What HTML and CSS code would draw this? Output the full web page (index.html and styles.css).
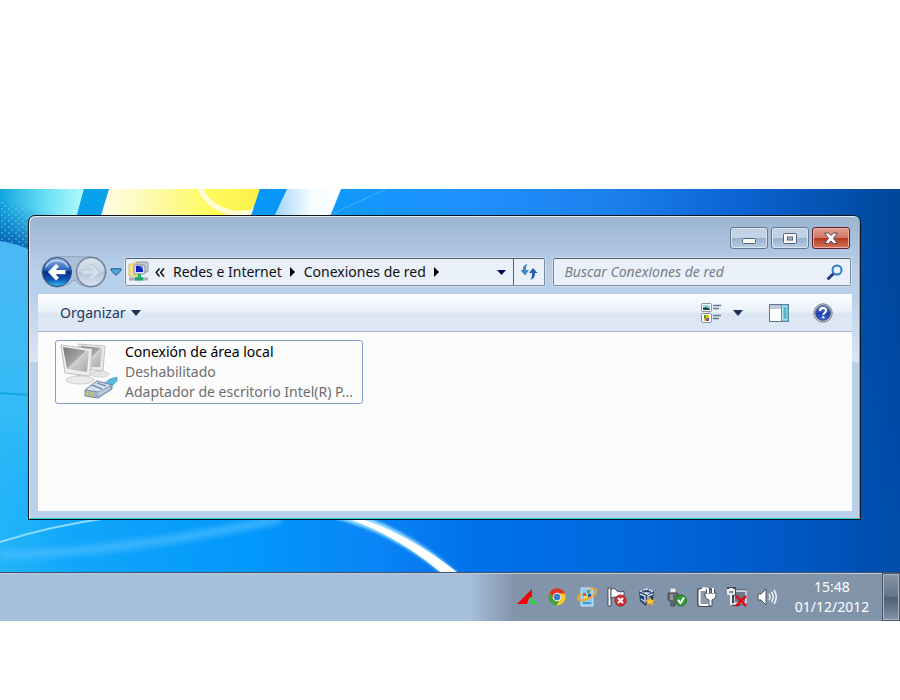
FILE: index.html
```html
<!DOCTYPE html>
<html lang="es">
<head>
<meta charset="utf-8">
<title>Conexiones de red</title>
<link rel="stylesheet" href="styles.css">
</head>
<body>
<div class="desktop">
  <svg class="wallpaper" viewBox="0 0 900 383" preserveAspectRatio="none" aria-hidden="true">
    <defs>
      <linearGradient id="sky" x1="0" y1="0" x2="1" y2="0">
        <stop offset="0" stop-color="#23b4f8"/><stop offset=".08" stop-color="#10a7fb"/><stop offset=".28" stop-color="#0297fb"/>
        <stop offset=".42" stop-color="#0a84f6"/><stop offset=".52" stop-color="#0072ea"/><stop offset=".7" stop-color="#0068de"/><stop offset=".86" stop-color="#005ac8"/><stop offset="1" stop-color="#004cab"/>
      </linearGradient>
      <linearGradient id="top" x1="300" y1="0" x2="900" y2="0" gradientUnits="userSpaceOnUse">
        <stop offset="0" stop-color="#0a9cfb"/><stop offset=".28" stop-color="#2090fc"/><stop offset=".52" stop-color="#1b80ee"/><stop offset=".75" stop-color="#0a61cf"/><stop offset="1" stop-color="#004699"/>
      </linearGradient>
      <linearGradient id="fade" x1="0" y1="0" x2="0" y2="1">
        <stop offset="0" stop-color="#fff"/><stop offset=".2" stop-color="#fff"/><stop offset="1" stop-color="#000"/>
      </linearGradient>
      <mask id="topmask"><rect x="300" width="600" height="320" fill="url(#fade)"/></mask>
      <linearGradient id="aqua" x1="0" y1="0" x2="1" y2="0">
        <stop offset="0" stop-color="#12a4e0"/><stop offset=".5" stop-color="#62dcf4"/><stop offset="1" stop-color="#b4fafa"/>
      </linearGradient>
      <linearGradient id="deep" x1="20" y1="14" x2="8" y2="58" gradientUnits="userSpaceOnUse">
        <stop offset="0" stop-color="#0878c8" stop-opacity="0"/><stop offset="1" stop-color="#0559a8"/>
      </linearGradient>
      <linearGradient id="sun" x1="0" y1="0" x2="1" y2="0">
        <stop offset="0" stop-color="#fffdec"/><stop offset=".35" stop-color="#fdf9a8"/><stop offset=".7" stop-color="#fffb5c"/><stop offset="1" stop-color="#fcf048"/>
      </linearGradient>
      <linearGradient id="pane" x1="0" y1="0" x2="1" y2="0">
        <stop offset="0" stop-color="#9ed2f8"/><stop offset=".55" stop-color="#f4fcff"/><stop offset="1" stop-color="#fff"/>
      </linearGradient>
      <linearGradient id="left" x1="0" y1="0" x2="0" y2="1">
        <stop offset="0" stop-color="#4cb8f4"/><stop offset=".5" stop-color="#34bcf6"/><stop offset="1" stop-color="#1eb0f9" stop-opacity="0"/>
      </linearGradient>
      <pattern id="dots" width="7" height="6" patternUnits="userSpaceOnUse"><circle cx="2" cy="2" r="1" fill="#62cdf2"/><circle cx="5" cy="5" r="1" fill="#62cdf2"/></pattern>
      <filter id="soft"><feGaussianBlur stdDeviation="1.5"/></filter>
      <filter id="haze" x="-20%" y="-50%" width="140%" height="200%"><feGaussianBlur stdDeviation="3"/></filter>
    </defs>
    <rect width="900" height="383" fill="url(#sky)"/>
    <rect x="300" width="600" height="320" fill="url(#top)" mask="url(#topmask)"/>
    <path d="M0 0H84L68 60H0Z" fill="url(#aqua)"/>
    <path d="M0 0H84L68 70H0Z" fill="url(#deep)"/>
    <path d="M0 12L30 20V60L0 52Z" fill="url(#dots)" opacity=".6"/>
    <path d="M0 52Q18 54 40 66V383H0Z" fill="url(#left)"/>
    <path d="M84 0H109L98 30H76Z" fill="#08a0ea"/>
    <path d="M109 0H260L250 30H100Z" fill="url(#sun)"/>
    <path d="M200 0C212 24 238 28 258 21" fill="none" stroke="#fffef0" stroke-width="5" opacity=".85"/>
    <path d="M260 0H287L274 30H250Z" fill="#0797f8"/>
    <path d="M287 0H341L329 30H273Z" fill="url(#pane)"/>
    <path d="M330 26L386 0" stroke="#3eb2fb" stroke-width="1"/>
    <path d="M0 204L30 206" stroke="#16a8dc" stroke-width="2"/>
    <path d="M0 353Q50 337 108 329" fill="none" stroke="#8cdcff" stroke-width="2"/>
    <path d="M0 366Q120 364 280 330" fill="none" stroke="#4ebcff" stroke-width="8" opacity=".8" filter="url(#haze)"/>
    <path d="M336 324Q400 340 454 388" fill="none" stroke="#9be2ff" stroke-width="11" filter="url(#soft)"/>
    <path d="M330 324L358 329Q408 344 462 387L444 386Q390 340 330 324Z" fill="#fff"/>
  </svg>

  <main class="window">
    <header class="caption">
      <button class="cap" aria-label="Minimizar"><svg width="16" height="16" viewBox="0 0 16 16"><rect x="1.500" y="8.500" width="13" height="5" rx="1" fill="#f6f6f2" stroke="#53627a"/></svg></button>
      <button class="cap" aria-label="Maximizar"><svg width="16" height="16" viewBox="0 0 16 16"><rect x="1.500" y="3.500" width="13" height="10" rx="1" fill="#f6f6f6" stroke="#53627a"/><rect x="5.500" y="7" width="5" height="3" fill="#a9bfd9" stroke="#53627a"/></svg></button>
      <button class="cap close" aria-label="Cerrar"><svg width="16" height="16" viewBox="0 0 16 16"><path d="M1.500 3H5.500L8 5.500L10.500 3H14.500L10.500 8.300L14.500 13.500H10.500L8 11L5.500 13.500H1.500L5.500 8.300Z" fill="#fafafa" stroke="#5a4555"/></svg></button>
    </header>

    <nav class="navbar">
      <div class="travel">
        <svg class="cradle" width="66" height="32" viewBox="0 0 66 32" aria-hidden="true"><path d="M16 .7H50A15.300 15.300 0 0 1 50 31.300Q40 31 33 24Q26 31 16 31.300A15.300 15.300 0 0 1 16 .7Z" fill="#a9bfd9" stroke="#94a6bd"/></svg>
        <button class="round" aria-label="Atrás"><svg width="32" height="32" viewBox="0 0 32 32">
          <defs><linearGradient id="bk" x1="0" y1="0" x2="0" y2="1"><stop offset="0" stop-color="#9ab8e8"/><stop offset=".42" stop-color="#2c66bd"/><stop offset=".5" stop-color="#052c86"/><stop offset=".75" stop-color="#0a56b4"/><stop offset="1" stop-color="#32c4f4"/></linearGradient></defs>
          <circle cx="16" cy="16" r="14.500" fill="url(#bk)" stroke="#2b4677"/><path d="M5 11A12.500 12.500 0 0 1 27 11" fill="none" stroke="#dbe8fa" stroke-width="1.500" opacity=".7"/>
          <path d="M7 16L15 8L18 10.500L14.500 14H24.500V18.300H14.500L18 21.700L15 24.500Z" fill="#fff"/></svg></button>
        <button class="round" aria-label="Adelante"><svg width="32" height="32" viewBox="0 0 32 32">
          <defs><linearGradient id="fw" x1="0" y1="0" x2="0" y2="1"><stop offset="0" stop-color="#dbe4ef"/><stop offset=".48" stop-color="#c6d3e2"/><stop offset=".52" stop-color="#b4c4d8"/><stop offset="1" stop-color="#dce7f4"/></linearGradient></defs>
          <circle cx="16" cy="16" r="14.500" fill="url(#fw)" stroke="#77869c" stroke-width="1.500"/>
          <path d="M25 16L17 8L14 10.500L17.500 14H7.500V18.300H17.500L14 21.700L17 24.500Z" fill="#d3deea" stroke="#bdc9d8"/></svg></button>
      </div>
      <button class="recent" aria-label="Páginas recientes"><svg width="12" height="8" viewBox="0 0 12 8"><path d="M1 .8H11V2.500L6 7.300L1 2.500Z" fill="#4ba8dc" stroke="#1f5485"/></svg></button>
      <div class="address">
        <svg class="place" width="22" height="22" viewBox="0 0 22 22" aria-hidden="true">
          <path d="M1 3H6L7 1H11V15H1Z" fill="#f3e08a" stroke="#d8c060"/><rect x="9" y="1" width="11" height="10" rx="1" fill="#c5cbd4" stroke="#8c95a4"/><rect x="6" y="4" width="11" height="9" rx="1" fill="#dde2ec" stroke="#848da5"/><rect x="8" y="5" width="7" height="6" fill="#1020c4"/><path d="M12 5H15V9Z" fill="#7996ee"/>
          <path d="M10 13H13V16H15V19H8V16H10Z" fill="#1ab56e"/><path d="M1 18H20" stroke="#a5adb5" stroke-width="3"/><path d="M7 18H15" stroke="#17a866" stroke-width="3"/></svg>
        <svg class="more" width="10" height="9" viewBox="0 0 10 9" aria-hidden="true"><path d="M4.500 .5L1.200 4.500L4.500 8.500M9 .5L5.700 4.500L9 8.500" fill="none" stroke="#111" stroke-width="1.500"/></svg>
        <a href="#">Redes e Internet</a>
        <svg class="sep" width="5" height="10" viewBox="0 0 5 10" aria-hidden="true"><path d="M0 0L5 5L0 10Z" fill="#000"/></svg>
        <a href="#">Conexiones de red</a>
        <svg class="sep" width="5" height="10" viewBox="0 0 5 10" aria-hidden="true"><path d="M0 0L5 5L0 10Z" fill="#000"/></svg>
        <button class="history" aria-label="Ubicaciones anteriores"><svg width="9" height="5" viewBox="0 0 9 5"><path d="M0 0H9L4.500 5Z" fill="#06064e"/></svg></button>
        <button class="refresh" aria-label="Actualizar"><svg width="18" height="18" viewBox="0 0 18 18"><path d="M7.500 1Q2.500 2 3 7H.5L5 12.500L9 7H6Q5.500 4 7.500 1Z" fill="#3d86ca"/><path d="M10.500 17Q15.500 15 15 10H17.500L13 5L9 10H12Q12.500 14 10.500 17Z" fill="#2460ae"/></svg></button>
      </div>
      <form class="search">
        <input type="search" aria-label="Buscar" placeholder="Buscar Conexiones de red">
        <svg width="16" height="16" viewBox="0 0 16 16" aria-hidden="true"><path d="M1.500 14.500L6.500 9.500" stroke="#263b86" stroke-width="3" stroke-linecap="round"/><circle cx="10" cy="6" r="4.500" fill="#e8f4fd" stroke="#2f7cc4" stroke-width="2"/></svg>
      </form>
    </nav>

    <section class="client">
      <div class="toolbar">
        <button class="tool organize">Organizar <svg width="10" height="6" viewBox="0 0 10 6" aria-hidden="true"><path d="M0 0H10L5 6Z" fill="#1b3353"/></svg></button>
        <button class="tool" aria-label="Cambiar la vista"><svg width="20" height="20" viewBox="0 0 20 20"><rect x=".5" y=".5" width="10" height="8" rx="1" fill="#fff" stroke="#8291a5"/><rect x="2" y="2" width="7" height="5" fill="#8dd8ee"/><path d="M2 7V5L5 4L9 6V7Z" fill="#214b39"/><rect x=".5" y="10.500" width="10" height="9" rx="1" fill="#fff" stroke="#8291a5"/><path d="M3 12H5V15H3Z" fill="#3c9f3c"/><path d="M5 12H8V15H5Z" fill="#f0bc19"/><path d="M3 15H5V18H3Z" fill="#cad339"/><path d="M4 14L8 18H5Z" fill="#bf2850"/><path d="M6 15H8V18H7Z" fill="#2e54ba"/><path d="M12 2.500H20M12 5.500H18M12 12.500H20M12 15.500H18" stroke="#66758e" stroke-width="1.300"/></svg></button>
        <button class="tool drop" aria-label="Más opciones"><svg width="10" height="6" viewBox="0 0 10 6"><path d="M0 0H10L5 6Z" fill="#1b3353"/></svg></button>
        <button class="tool pane" aria-label="Mostrar el panel de vista previa"><svg width="20" height="18" viewBox="0 0 20 18"><rect x=".5" y=".5" width="19" height="17" fill="#fdfdfd" stroke="#5f748f"/><path d="M1 2H12" stroke="#b9cade" stroke-width="2"/><path d="M1 4H12" stroke="#8496b0"/><rect x="12.500" y="1" width="6.500" height="16" fill="#b1e5f2" stroke="#4e9ab8"/><rect x="14.500" y="3" width="3" height="12" fill="#55b4cd"/></svg></button>
        <button class="tool help" aria-label="Ayuda"><svg width="20" height="20" viewBox="0 0 20 20"><defs><linearGradient id="hp" x1="0" y1="0" x2="0" y2="1"><stop offset="0" stop-color="#7c9be4"/><stop offset=".5" stop-color="#1f3fae"/><stop offset="1" stop-color="#3966d4"/></linearGradient></defs><circle cx="10" cy="10" r="9.200" fill="#c3c7ce" stroke="#7c818b"/><circle cx="10" cy="10" r="7.300" fill="url(#hp)" stroke="#334787"/><path d="M7 8Q7 5 10 5T13 7.700Q13 9 11.500 10Q10.300 10.800 10.300 12" fill="none" stroke="#fff" stroke-width="2"/><rect x="9.200" y="13.200" width="2.200" height="2.200" fill="#fff"/></svg></button>
      </div>
      <div class="list">
        <article class="item">
          <svg width="60" height="58" viewBox="0 0 60 58" aria-hidden="true">
            <defs><linearGradient id="scr" x1="0" y1="0" x2="1" y2="1"><stop offset="0" stop-color="#777"/><stop offset=".5" stop-color="#a5a5a5"/><stop offset=".52" stop-color="#cfcfcf"/><stop offset="1" stop-color="#a8a8a8"/></linearGradient></defs>
            <ellipse cx="40" cy="32" rx="9" ry="3" fill="#e4e4e4" stroke="#d2d2d2"/>
            <path d="M18 2L45 4L43 29L22 27Z" fill="#e8e8e8" stroke="#c4c4c4"/><path d="M21 4L42 6L40 25L23 25Z" fill="url(#scr)"/>
            <path d="M16 31H24V37H16Z" fill="#d0d0d0"/><ellipse cx="20" cy="38" rx="14" ry="4" fill="#eaeaea" stroke="#d0d0d0"/>
            <path d="M1 3L32 7L30 34L5 31Z" fill="#efefef" stroke="#c0c0c0"/><path d="M3 5L29 9L27 30L7 27Z" fill="url(#scr)"/>
            <path d="M42 43L50 37L57 35V39L50 46L46 49Z" fill="#55b7dc" stroke="#61b0ce"/>
            <path d="M25 48L37 39L52 43V47L38 56L25 54Z" fill="#9eafca" stroke="#7189ae"/><path d="M25 48L37 39L52 43L39 50Z" fill="#d6e0ef" stroke="#7890b3"/><path d="M27 49V54M30 49V54M33 50V55" stroke="#d1c45b" stroke-width="1.500"/><path d="M37 51L50 45V47L39 54Z" fill="#bac9df"/><path d="M32 43L42 47M37 41L46 44" stroke="#7890b3" stroke-width="1.500"/>
          </svg>
          <div class="info">
            <h2>Conexión de área local</h2>
            <p>Deshabilitado</p>
            <p>Adaptador de escritorio Intel(R) P...</p>
          </div>
        </article>
      </div>
    </section>
  </main>

  <footer class="taskbar">
    <div class="tray">
      <svg width="20" height="20" viewBox="0 0 20 20" aria-hidden="true"><path d="M0 17L15 2V10L12 11L10 17Z" fill="#f00007"/><path d="M12 9L20 17H15Z" fill="#06ed13"/></svg>
      <svg width="20" height="20" viewBox="0 0 20 20" aria-hidden="true"><circle cx="10" cy="10" r="8.500" fill="#f5cd25"/><path d="M2.600 5.700A8.500 8.500 0 0 1 18 6.500H10L6.500 12Z" fill="#d93428"/><path d="M2.600 5.700L7 13L12 14L9.500 18.500A8.500 8.500 0 0 1 2.600 5.700Z" fill="#44a047"/><circle cx="10" cy="10" r="4.300" fill="#f6f3e5"/><circle cx="10" cy="10" r="3.300" fill="#3c7fc4"/></svg>
      <svg width="20" height="20" viewBox="0 0 20 20" aria-hidden="true"><path d="M4 1H16V19H4Z" fill="#8cccf1" stroke="#c8e8f8"/><path d="M6 16H14" stroke="#4e96cc" stroke-width="2"/><path d="M6 6H9V9H6Z" fill="#de5530"/><path d="M10 3H13V6H10Z" fill="#54a63d"/><path d="M11 7H14V10H11Z" fill="#2258b2"/><path d="M7 9H10V12H7Z" fill="#f6db45"/><path d="M13 2Q20 1 19 5Q16 11 7 13Q0 14 1 10Q2 8 4 7" fill="none" stroke="#f1a535" stroke-width="2"/></svg>
      <svg width="20" height="20" viewBox="0 0 20 20" aria-hidden="true"><path d="M1 1H4V19H1Z" fill="#fff" stroke="#454c57"/><path d="M4 2Q8 0 10 4Q14 6 17 4V12Q12 13 9 10Q6 10 4 11Z" fill="#fff" stroke="#454c57"/><circle cx="13.500" cy="13.500" r="5.500" fill="#d92d2b" stroke="#9b2020"/><path d="M11 11L16 16M16 11L11 16" stroke="#fff" stroke-width="2"/></svg>
      <svg width="20" height="20" viewBox="0 0 20 20" aria-hidden="true"><path d="M2 4L10 1L17 4L16 14L9 19L3 14Z" fill="#203f67"/><path d="M2 4L10 1L17 4L10 8Z" fill="#dce8f2"/><path d="M5 4L14 5M6 5L12 3" stroke="#284670" stroke-width="1.500"/><path d="M3 7L8 9V16M16 7L11 9V16M4 12L7 14" stroke="#c5d6e6" stroke-width="1.500" fill="none"/><path d="M13 10L14.500 13H18L15.500 15L17 18.500L13 16.500L9.500 18.500L10.500 15L8 13H11.500Z" fill="#ffc53a" stroke="#d58c20" stroke-width=".5"/></svg>
      <svg width="20" height="20" viewBox="0 0 20 20" aria-hidden="true"><rect x="3" y="1" width="6" height="5" fill="#e9ebed" stroke="#8a8f94"/><path d="M1 6H11V13L8 15V19H4V15L1 13Z" fill="#63686d" stroke="#4b4f54"/><path d="M3 7H6V13H3Z" fill="#8d9297"/><circle cx="14" cy="13.500" r="5.500" fill="#2f9d31" stroke="#1a771e"/><path d="M11 13L13.500 16L17 10.500" fill="none" stroke="#fff" stroke-width="2"/></svg>
      <svg width="20" height="20" viewBox="0 0 20 20" aria-hidden="true"><rect x="2" y="3" width="11" height="15" rx="1" fill="none" stroke="#474e59" stroke-width="4"/><path d="M5 1.500H10" stroke="#fff" stroke-width="2"/><rect x="2.500" y="3" width="10" height="15" rx="1" fill="#8f9aaa" stroke="#fff" stroke-width="2"/><path d="M11 2V6M16 2V6" stroke="#474e59" stroke-width="4"/><path d="M8 6H19V9Q18 12 15 13V19H12V13Q9 12 8 9Z" fill="#fff" stroke="#474e59"/><path d="M11 1V6M16 1V6" stroke="#fff" stroke-width="2"/></svg>
      <svg width="20" height="20" viewBox="0 0 20 20" aria-hidden="true"><rect x="7" y="4" width="12" height="12" fill="#7a8798" stroke="#3e4651" stroke-width="3"/><rect x="7" y="4" width="12" height="12" fill="#6b7889" stroke="#e9edf1" stroke-width="1.500"/><path d="M0 1H8V7L6 9V18H13" fill="none" stroke="#3f4651" stroke-width="2"/><path d="M1 2V7H7V2M3 1V4M5 1V4M4 7V17H12" fill="none" stroke="#fff" stroke-width="1.700"/><path d="M9 9L19 19M19 9L9 19" stroke="#e00f19" stroke-width="2.500"/></svg>
      <svg width="20" height="20" viewBox="0 0 20 20" aria-hidden="true"><path d="M1 7H4L9 2V18L4 13H1Z" fill="#fff" stroke="#4d5663"/><path d="M12 7Q14 10 12 13M14.500 5Q18 10 14.500 15M17 3Q21.500 10 17 17" fill="none" stroke="#eef1f4" stroke-width="1.500"/></svg>
    </div>
    <div class="clock"><time>15:48</time><time>01/12/2012</time></div>
    <button class="peek" aria-label="Mostrar escritorio"></button>
  </footer>
</div>
</body>
</html>
```
FILE: styles.css
```css
* { box-sizing: border-box; }
body {
  margin: 0;
  padding: 189px 0 79px;
  background: #fff;
  font-family: "Noto Sans", "Open Sans", sans-serif;
  font-size: 14px;
  line-height: 20px;
  color: #111;
}
button, input { font: inherit; color: inherit; }
button { padding: 0; border: 0; background: none; }
svg { display: block; flex: none; }

.desktop { position: relative; overflow: hidden; background: #0a84f6; }
.wallpaper { position: absolute; top: 0; left: 0; width: 100%; height: calc(100% - 49px); }

.window {
  position: relative;
  margin: 26px 39px 52px 28px;
  padding: 11px 8px 8px 9px;
  border: 1px solid #10151c;
  border-radius: 7px 7px 0 0;
  background:
    linear-gradient(#d9e6f500, #d9e6f5) left 78px / 9px 68px no-repeat,
    linear-gradient(#d9e6f500, #d9e6f5) right 78px / 8px 68px no-repeat,
    linear-gradient(#9bb4d0, #b9d0ea 56px, #b9d0ea);
  box-shadow: inset 1px 1px 0 #e4edf5, inset -1px -1px 0 #2ccbd4;
}

.caption { display: flex; justify-content: flex-end; gap: 3px; padding-right: 2px; }
.cap {
  display: flex; align-items: center; justify-content: center;
  width: 38px; height: 22px;
  border: 1px solid #66788f; border-radius: 3px;
  background: linear-gradient(#c2d2e5 48%, #9bb2cd 52%, #b8cde4);
  box-shadow: inset 0 0 0 1px #d8e4f1;
}
.close {
  border-color: #5c2026;
  background: linear-gradient(#e3a092, #d17765 48%, #b53a20 52%, #d4755a);
  box-shadow: inset 0 0 0 1px #e9b2a5;
}

.navbar { display: flex; align-items: center; margin: 7px 1px 6px 3px; }
.travel { position: relative; display: flex; gap: 2px; }
.cradle { position: absolute; top: 0; left: 0; }
.round { position: relative; width: 32px; height: 32px; }
.recent { width: 12px; margin: 0 3px; }
.address, .search {
  display: flex; align-items: center;
  height: 28px;
  border: 1px solid #7e8b9c; border-top-color: #545f6e; border-radius: 2px;
  background: #e9f0f9;
  box-shadow: 0 0 0 1px #cfdff0;
}
.address { flex: 417; min-width: 0; padding-left: 2px; }
.address a { color: #111; text-decoration: none; white-space: nowrap; }
.more { margin: 0 8px 0 5px; }
.sep { margin: 0 9px 0 8px; }
.history { display: flex; justify-content: center; width: 24px; margin-left: auto; }
.refresh { display: flex; align-items: center; justify-content: center; width: 31px; height: 26px; border-left: 1px solid #59636f; }
.search { flex: 279; min-width: 0; margin-left: 8px; padding: 0 7px 0 10px; }
.search input { flex: 1; min-width: 0; padding: 0; border: 0; outline: 0; background: none; }
.search input::placeholder { color: #777e86; font-style: italic; opacity: 1; }

.client { background: #fcfcfc; }
.toolbar {
  display: flex; align-items: center;
  height: 38px; padding: 0 19px 0 22px;
  border-bottom: 1px solid #9fb3ce;
  background: linear-gradient(#fcfdff, #eaf1fa 48%, #dce6f3 52%, #dde7f5);
  color: #1e395b;
}
.tool { display: flex; align-items: center; gap: 5px; }
.organize { margin-right: auto; }
.drop { margin: 0 26px 0 12px; }
.help { margin-left: 24px; }
.list { min-height: 179px; padding: 8px 17px; }
.item {
  display: flex; gap: 5px;
  width: 38%; min-width: 308px; height: 64px;
  padding: 1px 4px;
  border: 1px solid #7f9fc8; border-radius: 3px;
}
.info { min-width: 0; color: #6d6d6d; white-space: nowrap; }
.info h2 { margin: 0; font: inherit; color: #000; }
.info p { margin: 0; }

.taskbar {
  position: relative;
  display: flex; align-items: stretch; justify-content: flex-end;
  height: 49px;
  border-top: 1px solid #40546d;
  background: linear-gradient(90deg, #a6bfdb calc(100% - 430px), #8294aa calc(100% - 385px));
  box-shadow: inset 0 1px 0 #c1cbda;
}
.tray { display: flex; align-items: center; gap: 10px; margin-right: 16px; }
.clock { display: flex; flex-direction: column; justify-content: center; width: 78px; margin-right: 11px; color: #fff; text-align: center; }
.peek { width: 18px; border: 1px solid #4b5867; background: linear-gradient(#8795a5, #65758a 48%, #4e5d70 52%, #8394a9); box-shadow: inset 0 0 0 1px #aab6c4; }
```
